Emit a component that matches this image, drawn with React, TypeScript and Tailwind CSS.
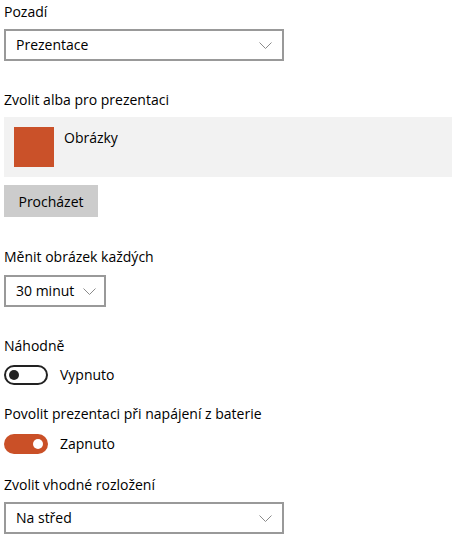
import React from 'react'

const font = { fontFamily: '"Open Sans", "Noto Sans", sans-serif' }

function Chevron() {
  return (
    <svg width="13" height="7" viewBox="0 0 13 7" fill="none" className="shrink-0">
      <path d="M0.5 0.5 L6.5 6.5 L12.5 0.5" stroke="#8a8a8a" strokeWidth="1" />
    </svg>
  )
}

function Select({ value, width, compact = false }: { value: string; width: string; compact?: boolean }) {
  return (
    <div
      className={`${width} h-8 border-2 border-[#999999] bg-white flex items-center pl-[10px] ${
        compact ? 'gap-[9px] pr-[4px]' : 'justify-between pr-[10px]'
      }`}
    >
      <span className="text-[14px] text-black leading-5 whitespace-nowrap">{value}</span>
      <Chevron />
    </div>
  )
}

function Toggle({ on, label }: { on: boolean; label: string }) {
  return (
    <div className="flex items-center gap-3">
      {on ? (
        <div className="w-11 h-5 rounded-full bg-[#ca5027] flex items-center justify-end pr-[5px]">
          <div className="w-[10px] h-[10px] rounded-full bg-white" />
        </div>
      ) : (
        <div className="w-11 h-5 rounded-full border-2 border-[#222222] flex items-center pl-[3px]">
          <div className="w-[10px] h-[10px] rounded-full bg-[#222222]" />
        </div>
      )}
      <span className="text-[14px] leading-5 text-black">{label}</span>
    </div>
  )
}

function Label({ children, className = '' }: { children: React.ReactNode; className?: string }) {
  return <div className={`text-[14px] leading-5 text-black ${className}`}>{children}</div>
}

export default function App() {
  return (
    <div className="w-[459px] h-[560px] bg-white pl-1 pt-[2px]" style={font}>
      <Label>Pozadí</Label>
      <div className="mt-[7px]">
        <Select value="Prezentace" width="w-[280px]" />
      </div>

      <Label className="mt-[29px]">Zvolit alba pro prezentaci</Label>
      <div className="mt-[7px] w-[448px] h-[60px] bg-[#f2f2f2] flex items-start p-[10px] gap-[10px]">
        <div className="w-10 h-10 bg-[#ca5129]" />
        <span className="text-[14px] leading-5 text-black mt-[1px]">Obrázky</span>
      </div>
      <button className="mt-2 w-[94px] h-8 bg-[#cccccc] text-[14px] text-black flex items-center justify-center">
        Procházet
      </button>

      <Label className="mt-[30px]">Měnit obrázek každých</Label>
      <div className="mt-[8px]">
        <Select value="30 minut" width="w-[102px]" compact />
      </div>

      <Label className="mt-[29px]">Náhodně</Label>
      <div className="mt-[9px]">
        <Toggle on={false} label="Vypnuto" />
      </div>

      <Label className="mt-[19px]">Povolit prezentaci při napájení z baterie</Label>
      <div className="mt-[10px]">
        <Toggle on={true} label="Zapnuto" />
      </div>

      <Label className="mt-[21px]">Zvolit vhodné rozložení</Label>
      <div className="mt-[7px]">
        <Select value="Na střed" width="w-[280px]" />
      </div>
    </div>
  )
}
